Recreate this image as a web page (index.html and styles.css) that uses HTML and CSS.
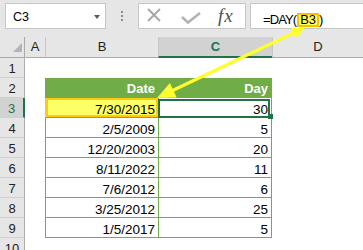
FILE: index.html
```html
<!DOCTYPE html>
<html>
<head>
<meta charset="utf-8">
<link rel="stylesheet" href="styles.css">
</head>
<body>
<div class="app">
  <div class="fbar">
    <div class="namebox"><span class="nb-text">C3</span><span class="nb-caret"></span></div>
    <div class="grip"><i></i><i></i><i></i></div>
    <div class="btns">
      <svg class="ic-x" width="14" height="14" viewBox="0 0 14 14"><path d="M1 1L13 13M13 1L1 13" stroke="#a6a6a6" stroke-width="1.8" fill="none"/></svg>
      <svg class="ic-ok" width="20" height="12" viewBox="0 0 20 12"><path d="M1 5L7 10.5L19 1" stroke="#b3b3b3" stroke-width="2.6" fill="none"/></svg>
      <span class="fx">fx</span>
    </div>
    <div class="formula"><span class="fn">=DAY(</span><span class="ref">B3</span>)</div>
  </div>
  <div class="sheet">
    <div class="ch corner"></div>
    <div class="ch">A</div>
    <div class="ch bl">B</div>
    <div class="ch bl sel">C</div>
    <div class="ch bl">D</div>

    <div class="rh">1</div><div></div><div></div><div></div><div></div>

    <div class="rh">2</div><div></div><div class="c th tb">Date</div><div class="c th tc">Day</div><div></div>

    <div class="rh sel">3</div><div></div><div class="c t tb hl">7/30/2015</div><div class="c t tc cur">30</div><div></div>

    <div class="rh">4</div><div></div><div class="c t tb">2/5/2009</div><div class="c t tc">5</div><div></div>
    <div class="rh">5</div><div></div><div class="c t tb">12/20/2003</div><div class="c t tc">20</div><div></div>
    <div class="rh">6</div><div></div><div class="c t tb">8/11/2022</div><div class="c t tc">11</div><div></div>
    <div class="rh">7</div><div></div><div class="c t tb">7/6/2012</div><div class="c t tc">6</div><div></div>
    <div class="rh">8</div><div></div><div class="c t tb">3/25/2012</div><div class="c t tc">25</div><div></div>
    <div class="rh">9</div><div></div><div class="c t tb">1/5/2017</div><div class="c t tc">5</div><div></div>
    <div class="rh">10</div><div></div><div></div><div></div><div></div>
  </div>
  <svg class="arrow" width="363" height="250" viewBox="0 0 363 250">
    <line x1="170" y1="91.7" x2="295" y2="32.3" stroke="#ffff2e" stroke-width="3.2"/>
    <polygon points="157,98 176.7,97.5 169.9,83.1" fill="#ffff2e"/>
    <polygon points="304.5,28 295.8,38.6 290.6,27.8" fill="#ffff2e"/>
  </svg>
</div>
</body>
</html>
```
FILE: styles.css
```css
* { box-sizing: border-box; margin: 0; padding: 0; }
body { margin: 0; width: 363px; height: 250px; overflow: hidden; background: #fff;
  font-family: "Liberation Sans", Arial, sans-serif; color: #000; }
.app { position: relative; width: 363px; height: 250px; overflow: hidden; }

.fbar { height: 37px; background: #e6e6e6; display: flex; align-items: flex-start; padding: 3px 0 0 5px; }
.namebox { width: 101px; height: 26px; background: #fff; border: 1px solid #c6c6c6;
  display: flex; align-items: center; padding-left: 7px; font-size: 12.5px; padding-top: 1px; }
.nb-caret { margin-left: auto; margin-right: 5px; width: 0; height: 0;
  border-left: 3.5px solid transparent; border-right: 3.5px solid transparent; border-top: 4px solid #5a5a5a; }
.grip { width: 32px; display: flex; flex-direction: column; align-items: center; gap: 2px; padding-top: 8px; }
.grip i { display: block; width: 2px; height: 2px; background: #8a8a8a; }
.btns { width: 108px; height: 26px; background: #fff; border: 1px solid #c6c6c6;
  display: flex; align-items: center; padding-left: 8px; }
.ic-x { margin-top: -2px; }
.ic-ok { margin-left: 20px; margin-top: 4px; }
.fx { margin-left: 17px; font-family: "Liberation Serif", "Times New Roman", serif; font-style: italic;
  font-size: 19px; color: #505050; letter-spacing: 1px; margin-top: -1px; }
.formula { margin-left: 4px; flex: 1; height: 26px; background: #fff; border: 1px solid #c6c6c6; border-right: none;
  padding: 8px 0 0 12px; font-size: 13px; line-height: 16px; white-space: nowrap; }
.fn { letter-spacing: -0.9px; }
.ref { display: inline-block; background: #ffff66; border: 2px solid #f7c000; padding: 0 1px; line-height: 10px; margin-left: 1px; }

.sheet { display: grid; grid-template-columns: 25px 20px 113px 114px 1fr;
  grid-template-rows: 21px repeat(10, 20px); }
.ch { background: #e6e6e6; border-bottom: 1px solid #ababab; text-align: center;
  font-size: 13px; line-height: 20px; color: #222; }
.ch.bl { border-left: 1px solid #c6c6c6; }
.ch.sel { background: #d2d2d2; color: #217346; font-weight: bold; border-bottom: 2px solid #217346; line-height: 19px; }
.ch.corner { border-right: 1px solid #ababab; position: relative; }
.ch.corner::after { content: ""; position: absolute; right: 2px; bottom: 5px; width: 9px; height: 9px;
  background: #b4b4b4; clip-path: polygon(100% 0, 100% 100%, 0 100%); }

.rh { background: #e6e6e6; border-right: 1px solid #ababab; border-bottom: 1px solid #d0d0d0;
  text-align: center; font-size: 13px; line-height: 20px; padding-top: 1px; color: #222; }
.rh.sel { background: #d2d2d2; color: #217346; border-right: 2px solid #217346; }

.c { font-size: 13.5px; text-align: right; padding: 2px 3px 0 0; line-height: 20px; white-space: nowrap; }
.t { border-bottom: 1px solid #70ad47; }
.tb { border-left: 1px solid #70ad47; }
.tc { border-left: 1px solid #70ad47; border-right: 1px solid #70ad47; }
.th { background: #70ad47; color: #fff; font-weight: bold; font-size: 13px; padding-top: 1px; border-color: #70ad47; }
.hl { background: #ffff66; box-shadow: inset 0 0 0 2px #ffc90e; border-left-color: #ffc90e; }
.cur { position: relative; }
.cur::after { content: ""; position: absolute; left: -1px; right: 1px; top: 1px; bottom: -1px;
  border: 2px solid #217346; }
.cur::before { content: ""; position: absolute; right: -2px; bottom: -2px; width: 5px; height: 5px;
  background: #217346; z-index: 1; }

.arrow { position: absolute; left: 0; top: 0; pointer-events: none; }
```
